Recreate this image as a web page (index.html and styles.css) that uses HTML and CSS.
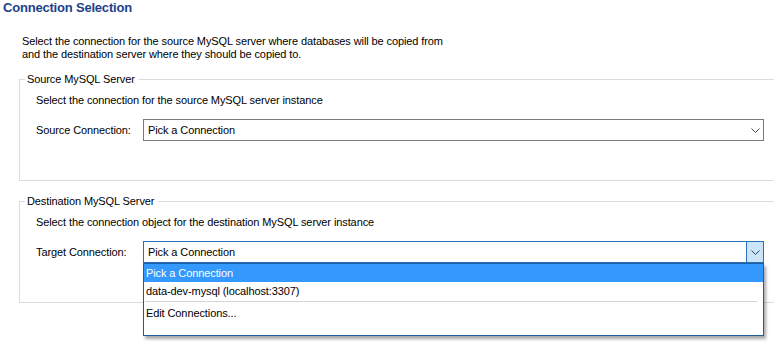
FILE: index.html
```html
<!DOCTYPE html>
<html lang="en">
<head>
    <title>Connection Selection</title>
    <link rel="stylesheet" href="styles.css">
</head>
<body>

    <h1 class="title">Connection Selection</h1>

    <p class="intro">
      Select the connection for the source MySQL server where databases will be copied from<br>
      and the destination server where they should be copied to.
    </p>

    <div class="group">
      <div class="group-title">Source MySQL Server</div>
      <p class="hint">Select the connection for the source MySQL server instance</p>
      <div class="row">
        <span class="row-label">Source Connection:</span>
        <div class="combo">
          <span class="combo-value">Pick a Connection</span>
          <span class="combo-arrow">
            <svg width="9" height="5" viewBox="0 0 9 5"><path d="M0.5 0.5 L4.5 4.5 L8.5 0.5" fill="none" stroke="#4a4a4a" stroke-width="1"/></svg>
          </span>
        </div>
      </div>
    </div>

    <div class="group group-dest">
      <div class="group-title">Destination MySQL Server</div>
      <p class="hint">Select the connection object for the destination MySQL server instance</p>
      <div class="row">
        <span class="row-label">Target Connection:</span>
        <div class="combo combo-open">
          <span class="combo-value">Pick a Connection</span>
          <span class="combo-arrow">
            <svg width="9" height="5" viewBox="0 0 9 5"><path d="M0.5 0.5 L4.5 4.5 L8.5 0.5" fill="none" stroke="#2b3f57" stroke-width="1"/></svg>
          </span>

          <ul class="dropdown">
            <li class="dropdown-item selected">Pick a Connection</li>
            <li class="dropdown-item">data-dev-mysql (localhost:3307)</li>
            <li class="dropdown-sep"></li>
            <li class="dropdown-item">Edit Connections...</li>
          </ul>
        </div>
      </div>
    </div>

</body>
</html>
```

FILE: styles.css
```css
body {
  margin: 0;
  min-height: 347px;
  background-color: white;
  color: black;
  font-family: "Liberation Sans", Arial, sans-serif;
  font-size: 11px;
  line-height: 13px;
  letter-spacing: -0.1px;
}

.title {
  margin: 0;
  padding-left: 3px;
  font-size: 13px;
  line-height: 16px;
  font-weight: bold;
  letter-spacing: -0.2px;
  color: #1d3f8c;
}

.intro {
  margin: 19px 0 0 22px;
}

.group {
  margin: 18px 0 0 19px;
  padding: 0 0 39px 16px;
  border: 1px solid #dcdcdc;
  border-right: none;
}

.group-dest {
  margin-top: 20px;
}

.group-title {
  width: fit-content;
  margin: -7px 0 0 -11px;
  padding: 0 4px 0 2px;
  background-color: white;
}

.hint {
  margin: 8px 0 0 0;
}

.row {
  display: flex;
  align-items: center;
  margin-top: 12px;
}

.row-label {
  width: 107px;
  flex-shrink: 0;
  white-space: nowrap;
}

.combo {
  position: relative;
  display: flex;
  align-items: center;
  width: 619px;
  height: 20px;
  border: 1px solid #7a7a7a;
}

.combo-value {
  flex: 1;
  padding-left: 4px;
}

.combo-arrow {
  display: flex;
  align-items: center;
  justify-content: center;
  width: 16px;
  height: 20px;
}

.combo-open {
  border-color: #2a70b8;
}

.combo-open .combo-arrow {
  background-color: #cce4f7;
  border-left: 1px solid #2a70b8;
}

.dropdown {
  position: absolute;
  z-index: 1;
  left: -1px;
  top: 21px;
  width: 619px;
  margin: 0;
  padding: 0 0 13px 0;
  list-style: none;
  background-color: white;
  border: 1px solid #1d5e9e;
  box-shadow: 2px 3px 3px rgba(0, 0, 0, 0.35);
}

.dropdown-item {
  height: 18px;
  line-height: 18px;
  padding-left: 2px;
}

.selected {
  background-color: #3399ff;
  color: white;
}

.dropdown-sep {
  height: 1px;
  margin: 1px 6px 2px 1px;
  background-color: #d5d5d5;
}
```
